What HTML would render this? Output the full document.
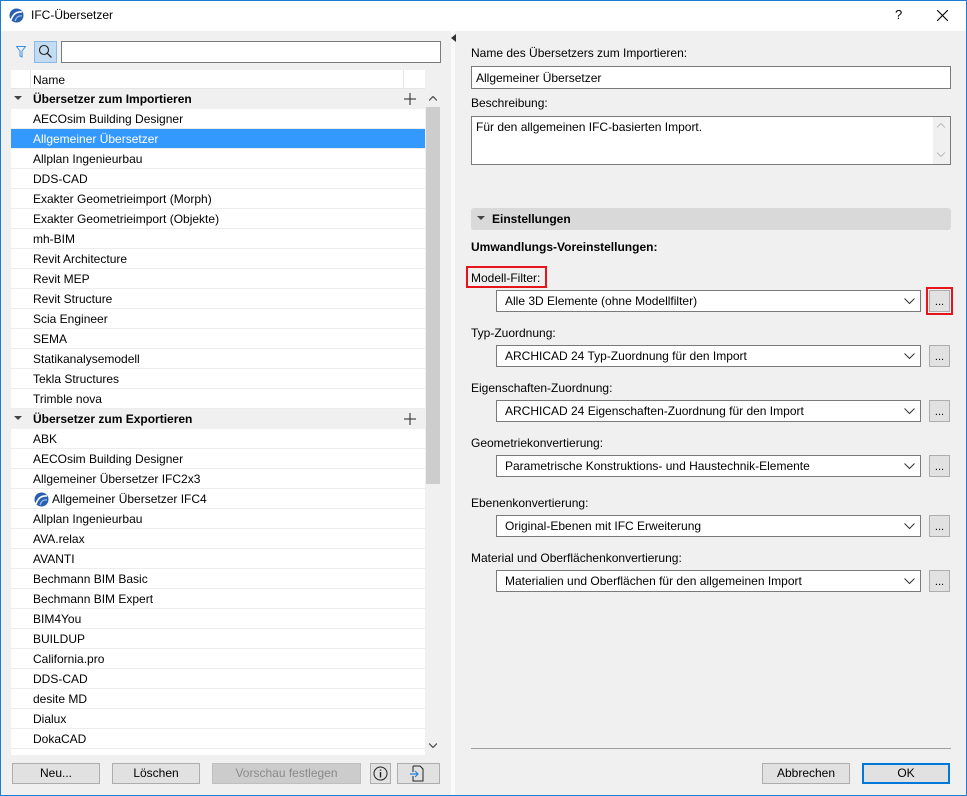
<!DOCTYPE html>
<html><head><meta charset="utf-8"><style>
*{box-sizing:border-box;margin:0;padding:0}
body{width:967px;height:796px;overflow:hidden;font-family:"Liberation Sans",sans-serif;font-size:12px;color:#000;background:#f0f0f0;position:relative}
.a{position:absolute}
.win{left:0;top:0;width:967px;height:796px;border:1px solid #1a7fd4}
.title{left:1px;top:1px;width:965px;height:30px;background:#fff}
.row{position:absolute;left:11px;width:414px;height:20px;line-height:20px;padding-left:22px;background:#fff;border-bottom:1px solid #ededed;white-space:nowrap}
.grp{background:#f0f0f0;font-weight:bold;border-bottom:none}
.sel{background:#3399ff;color:#fff}
.lbl{position:absolute;left:471px}
.dd{position:absolute;left:496px;width:425px;height:22px;background:#fff;border:1px solid #7a7a7a;line-height:20px;padding-left:8px}
.dd svg{position:absolute;right:5px;top:7px}
.eb{position:absolute;left:929px;width:21px;height:22px;background:#e1e1e1;border:1px solid #adadad;text-align:center;line-height:22px;font-size:11px}
.btn{position:absolute;top:763px;height:21px;background:#e1e1e1;border:1px solid #adadad;text-align:center;line-height:19px}
.red{outline:2px solid #e8141b}
</style></head><body>
<div class="a win"></div>
<div class="a title"></div>
<svg class="a" style="left:9px;top:8px" width="15" height="15" viewBox="0 0 15 15"><circle cx="7.5" cy="7.5" r="7" fill="#2a5fb0"/><path d="M2 12 Q5 3 13 4" stroke="#fff" stroke-width="1.6" fill="none"/><path d="M6 13 Q8 7 13 8" stroke="#9cc4ee" stroke-width="1.2" fill="none"/></svg>
<div class="a" style="left:31px;top:8px;font-size:12px">IFC-Übersetzer</div>
<div class="a" style="left:895px;top:7px;font-size:13px">?</div>
<svg class="a" style="left:937px;top:10px" width="11" height="11"><path d="M0 0L11 11M11 0L0 11" stroke="#000" stroke-width="1.1"/></svg>

<svg class="a" style="left:16px;top:46px" width="10" height="12"><path d="M0.5 0.5H9.5L6 5V11L4 10V5Z" fill="none" stroke="#3c8fdc"/></svg>
<div class="a" style="left:34px;top:41px;width:23px;height:22px;background:#c4dcf2;border:1px solid #87b9e6"></div>
<svg class="a" style="left:38px;top:44px" width="15" height="15"><circle cx="6" cy="6" r="4.5" fill="none" stroke="#222" stroke-width="1.1"/><path d="M9.3 9.3L13.5 13.5" stroke="#222" stroke-width="1.3"/></svg>
<div class="a" style="left:61px;top:41px;width:380px;height:22px;background:#fff;border:1px solid #7a7a7a"></div>

<div class="a" style="left:11px;top:70px;width:414px;height:685px;background:#fff"></div>
<div class="a" style="left:11px;top:70px;width:414px;height:19px;background:#fff;border-bottom:1px solid #e5e5e5"></div>
<div class="a" style="left:30px;top:70px;height:19px;border-left:1px solid #e5e5e5"></div>
<div class="a" style="left:403px;top:70px;height:19px;border-left:1px solid #e5e5e5"></div>
<div class="a" style="left:33px;top:73px">Name</div>

<div class="row grp" style="top:89px">Übersetzer zum Importieren</div>
<div class="row" style="top:109px">AECOsim Building Designer</div>
<div class="row sel" style="top:129px">Allgemeiner Übersetzer</div>
<div class="row" style="top:149px">Allplan Ingenieurbau</div>
<div class="row" style="top:169px">DDS-CAD</div>
<div class="row" style="top:189px">Exakter Geometrieimport (Morph)</div>
<div class="row" style="top:209px">Exakter Geometrieimport (Objekte)</div>
<div class="row" style="top:229px">mh-BIM</div>
<div class="row" style="top:249px">Revit Architecture</div>
<div class="row" style="top:269px">Revit MEP</div>
<div class="row" style="top:289px">Revit Structure</div>
<div class="row" style="top:309px">Scia Engineer</div>
<div class="row" style="top:329px">SEMA</div>
<div class="row" style="top:349px">Statikanalysemodell</div>
<div class="row" style="top:369px">Tekla Structures</div>
<div class="row" style="top:389px">Trimble nova</div>
<div class="row grp" style="top:409px">Übersetzer zum Exportieren</div>
<div class="row" style="top:429px">ABK</div>
<div class="row" style="top:449px">AECOsim Building Designer</div>
<div class="row" style="top:469px">Allgemeiner Übersetzer IFC2x3</div>
<div class="row" style="top:489px;padding-left:41px">Allgemeiner Übersetzer IFC4</div>
<svg class="a" style="left:34px;top:492px" width="15" height="15" viewBox="0 0 15 15"><circle cx="7.5" cy="7.5" r="7" fill="#2a5fb0"/><path d="M2 12 Q5 3 13 4" stroke="#fff" stroke-width="1.6" fill="none"/><path d="M6 13 Q8 7 13 8" stroke="#9cc4ee" stroke-width="1.2" fill="none"/></svg>
<div class="row" style="top:509px">Allplan Ingenieurbau</div>
<div class="row" style="top:529px">AVA.relax</div>
<div class="row" style="top:549px">AVANTI</div>
<div class="row" style="top:569px">Bechmann BIM Basic</div>
<div class="row" style="top:589px">Bechmann BIM Expert</div>
<div class="row" style="top:609px">BIM4You</div>
<div class="row" style="top:629px">BUILDUP</div>
<div class="row" style="top:649px">California.pro</div>
<div class="row" style="top:669px">DDS-CAD</div>
<div class="row" style="top:689px">desite MD</div>
<div class="row" style="top:709px">Dialux</div>
<div class="row" style="top:729px">DokaCAD</div>
<svg class="a" style="left:14px;top:96px" width="8" height="5"><path d="M0 0H8L4 4Z" fill="#444"/></svg>
<svg class="a" style="left:14px;top:416px" width="8" height="5"><path d="M0 0H8L4 4Z" fill="#444"/></svg>
<svg class="a" style="left:404px;top:93px" width="12" height="12"><path d="M6 0V12M0 6H12" stroke="#222"/></svg>
<svg class="a" style="left:404px;top:413px" width="12" height="12"><path d="M6 0V12M0 6H12" stroke="#222"/></svg>
<div class="a" style="left:425px;top:89px;width:16px;height:666px;background:#f0f0f0"></div>
<div class="a" style="left:426px;top:107px;width:14px;height:377px;background:#cdcdcd"></div>
<svg class="a" style="left:429px;top:96px" width="8" height="5"><path d="M0 4.5L4 0.5L8 4.5" stroke="#555" fill="none" stroke-width="1.3"/></svg>
<svg class="a" style="left:429px;top:743px" width="8" height="5"><path d="M0 0.5L4 4.5L8 0.5" stroke="#555" fill="none" stroke-width="1.3"/></svg>

<div class="btn" style="left:12px;width:88px">Neu...</div>
<div class="btn" style="left:112px;width:88px">Löschen</div>
<div class="btn" style="left:212px;width:149px;color:#8a8a8a;background:#ccc;border-color:#bfbfbf">Vorschau festlegen</div>
<div class="btn" style="left:370px;width:21px"></div>
<svg class="a" style="left:373px;top:766px" width="15" height="15"><circle cx="7.5" cy="7.5" r="6.5" fill="none" stroke="#222"/><path d="M7.5 6V11.5M7.5 3.5V4.8" stroke="#222" stroke-width="1.4"/></svg>
<div class="btn" style="left:397px;width:43px"></div>
<svg class="a" style="left:409px;top:765px" width="16" height="17"><path d="M4 1H11L14 4V16H4V11M4 7V1" fill="none" stroke="#222"/><path d="M1 9H9M6 6L9 9L6 12" fill="none" stroke="#2a7fd8" stroke-width="1.2"/></svg>

<div class="a" style="left:451px;top:31px;width:4px;height:764px;background:#fafafa"></div>
<svg class="a" style="left:451px;top:34px" width="5" height="8"><path d="M5 0V8L0 4Z" fill="#333"/></svg>

<div class="lbl" style="top:46px">Name des Übersetzers zum Importieren:</div>
<div class="a" style="left:471px;top:66px;width:480px;height:23px;background:#fff;border:1px solid #7a7a7a;padding:4px 0 0 4px">Allgemeiner Übersetzer</div>
<div class="lbl" style="top:96px">Beschreibung:</div>
<div class="a" style="left:471px;top:116px;width:480px;height:49px;background:#fff;border:1px solid #7a7a7a;padding:3px 0 0 4px">Für den allgemeinen IFC-basierten Import.</div>
<div class="a" style="left:933px;top:117px;width:17px;height:47px;background:#f0f0f0"></div>
<svg class="a" style="left:937px;top:123px" width="8" height="5"><path d="M0 4.5L4 0.5L8 4.5" stroke="#bbb" fill="none"/></svg>
<svg class="a" style="left:937px;top:152px" width="8" height="5"><path d="M0 0.5L4 4.5L8 0.5" stroke="#bbb" fill="none"/></svg>

<div class="a" style="left:471px;top:208px;width:480px;height:22px;background:#d9d9d9;border-radius:3px"></div>
<svg class="a" style="left:477px;top:216px" width="8" height="5"><path d="M0 0H8L4 4Z" fill="#444"/></svg>
<div class="a" style="left:492px;top:212px;font-weight:bold">Einstellungen</div>
<div class="lbl" style="top:240px;font-weight:bold">Umwandlungs-Voreinstellungen:</div>

<div class="a red" style="left:466px;top:266px;width:81px;height:22px;outline-offset:-2px"></div>
<div class="lbl" style="top:271px">Modell-Filter:</div>
<div class="dd" style="top:290px">Alle 3D Elemente (ohne Modellfilter)<svg width="11" height="7"><path d="M0.5 0.5L5.5 5.5L10.5 0.5" stroke="#333" fill="none"/></svg></div>
<div class="eb" style="top:290px">...</div>
<div class="a red" style="left:926px;top:287px;width:27px;height:28px;outline-offset:-2px"></div>

<div class="lbl" style="top:326px">Typ-Zuordnung:</div>
<div class="dd" style="top:345px">ARCHICAD 24 Typ-Zuordnung für den Import<svg width="11" height="7"><path d="M0.5 0.5L5.5 5.5L10.5 0.5" stroke="#333" fill="none"/></svg></div>
<div class="eb" style="top:345px">...</div>

<div class="lbl" style="top:381px">Eigenschaften-Zuordnung:</div>
<div class="dd" style="top:400px">ARCHICAD 24 Eigenschaften-Zuordnung für den Import<svg width="11" height="7"><path d="M0.5 0.5L5.5 5.5L10.5 0.5" stroke="#333" fill="none"/></svg></div>
<div class="eb" style="top:400px">...</div>

<div class="lbl" style="top:436px">Geometriekonvertierung:</div>
<div class="dd" style="top:455px">Parametrische Konstruktions- und Haustechnik-Elemente<svg width="11" height="7"><path d="M0.5 0.5L5.5 5.5L10.5 0.5" stroke="#333" fill="none"/></svg></div>
<div class="eb" style="top:455px">...</div>

<div class="lbl" style="top:496px">Ebenenkonvertierung:</div>
<div class="dd" style="top:515px">Original-Ebenen mit IFC Erweiterung<svg width="11" height="7"><path d="M0.5 0.5L5.5 5.5L10.5 0.5" stroke="#333" fill="none"/></svg></div>
<div class="eb" style="top:515px">...</div>

<div class="lbl" style="top:551px">Material und Oberflächenkonvertierung:</div>
<div class="dd" style="top:570px">Materialien und Oberflächen für den allgemeinen Import<svg width="11" height="7"><path d="M0.5 0.5L5.5 5.5L10.5 0.5" stroke="#333" fill="none"/></svg></div>
<div class="eb" style="top:570px">...</div>

<div class="a" style="left:471px;top:748px;width:480px;height:1px;background:#a0a0a0"></div>
<div class="btn" style="left:762px;width:88px">Abbrechen</div>
<div class="btn" style="left:862px;width:88px;border:2px solid #0078d7;line-height:17px">OK</div>
</body></html>
